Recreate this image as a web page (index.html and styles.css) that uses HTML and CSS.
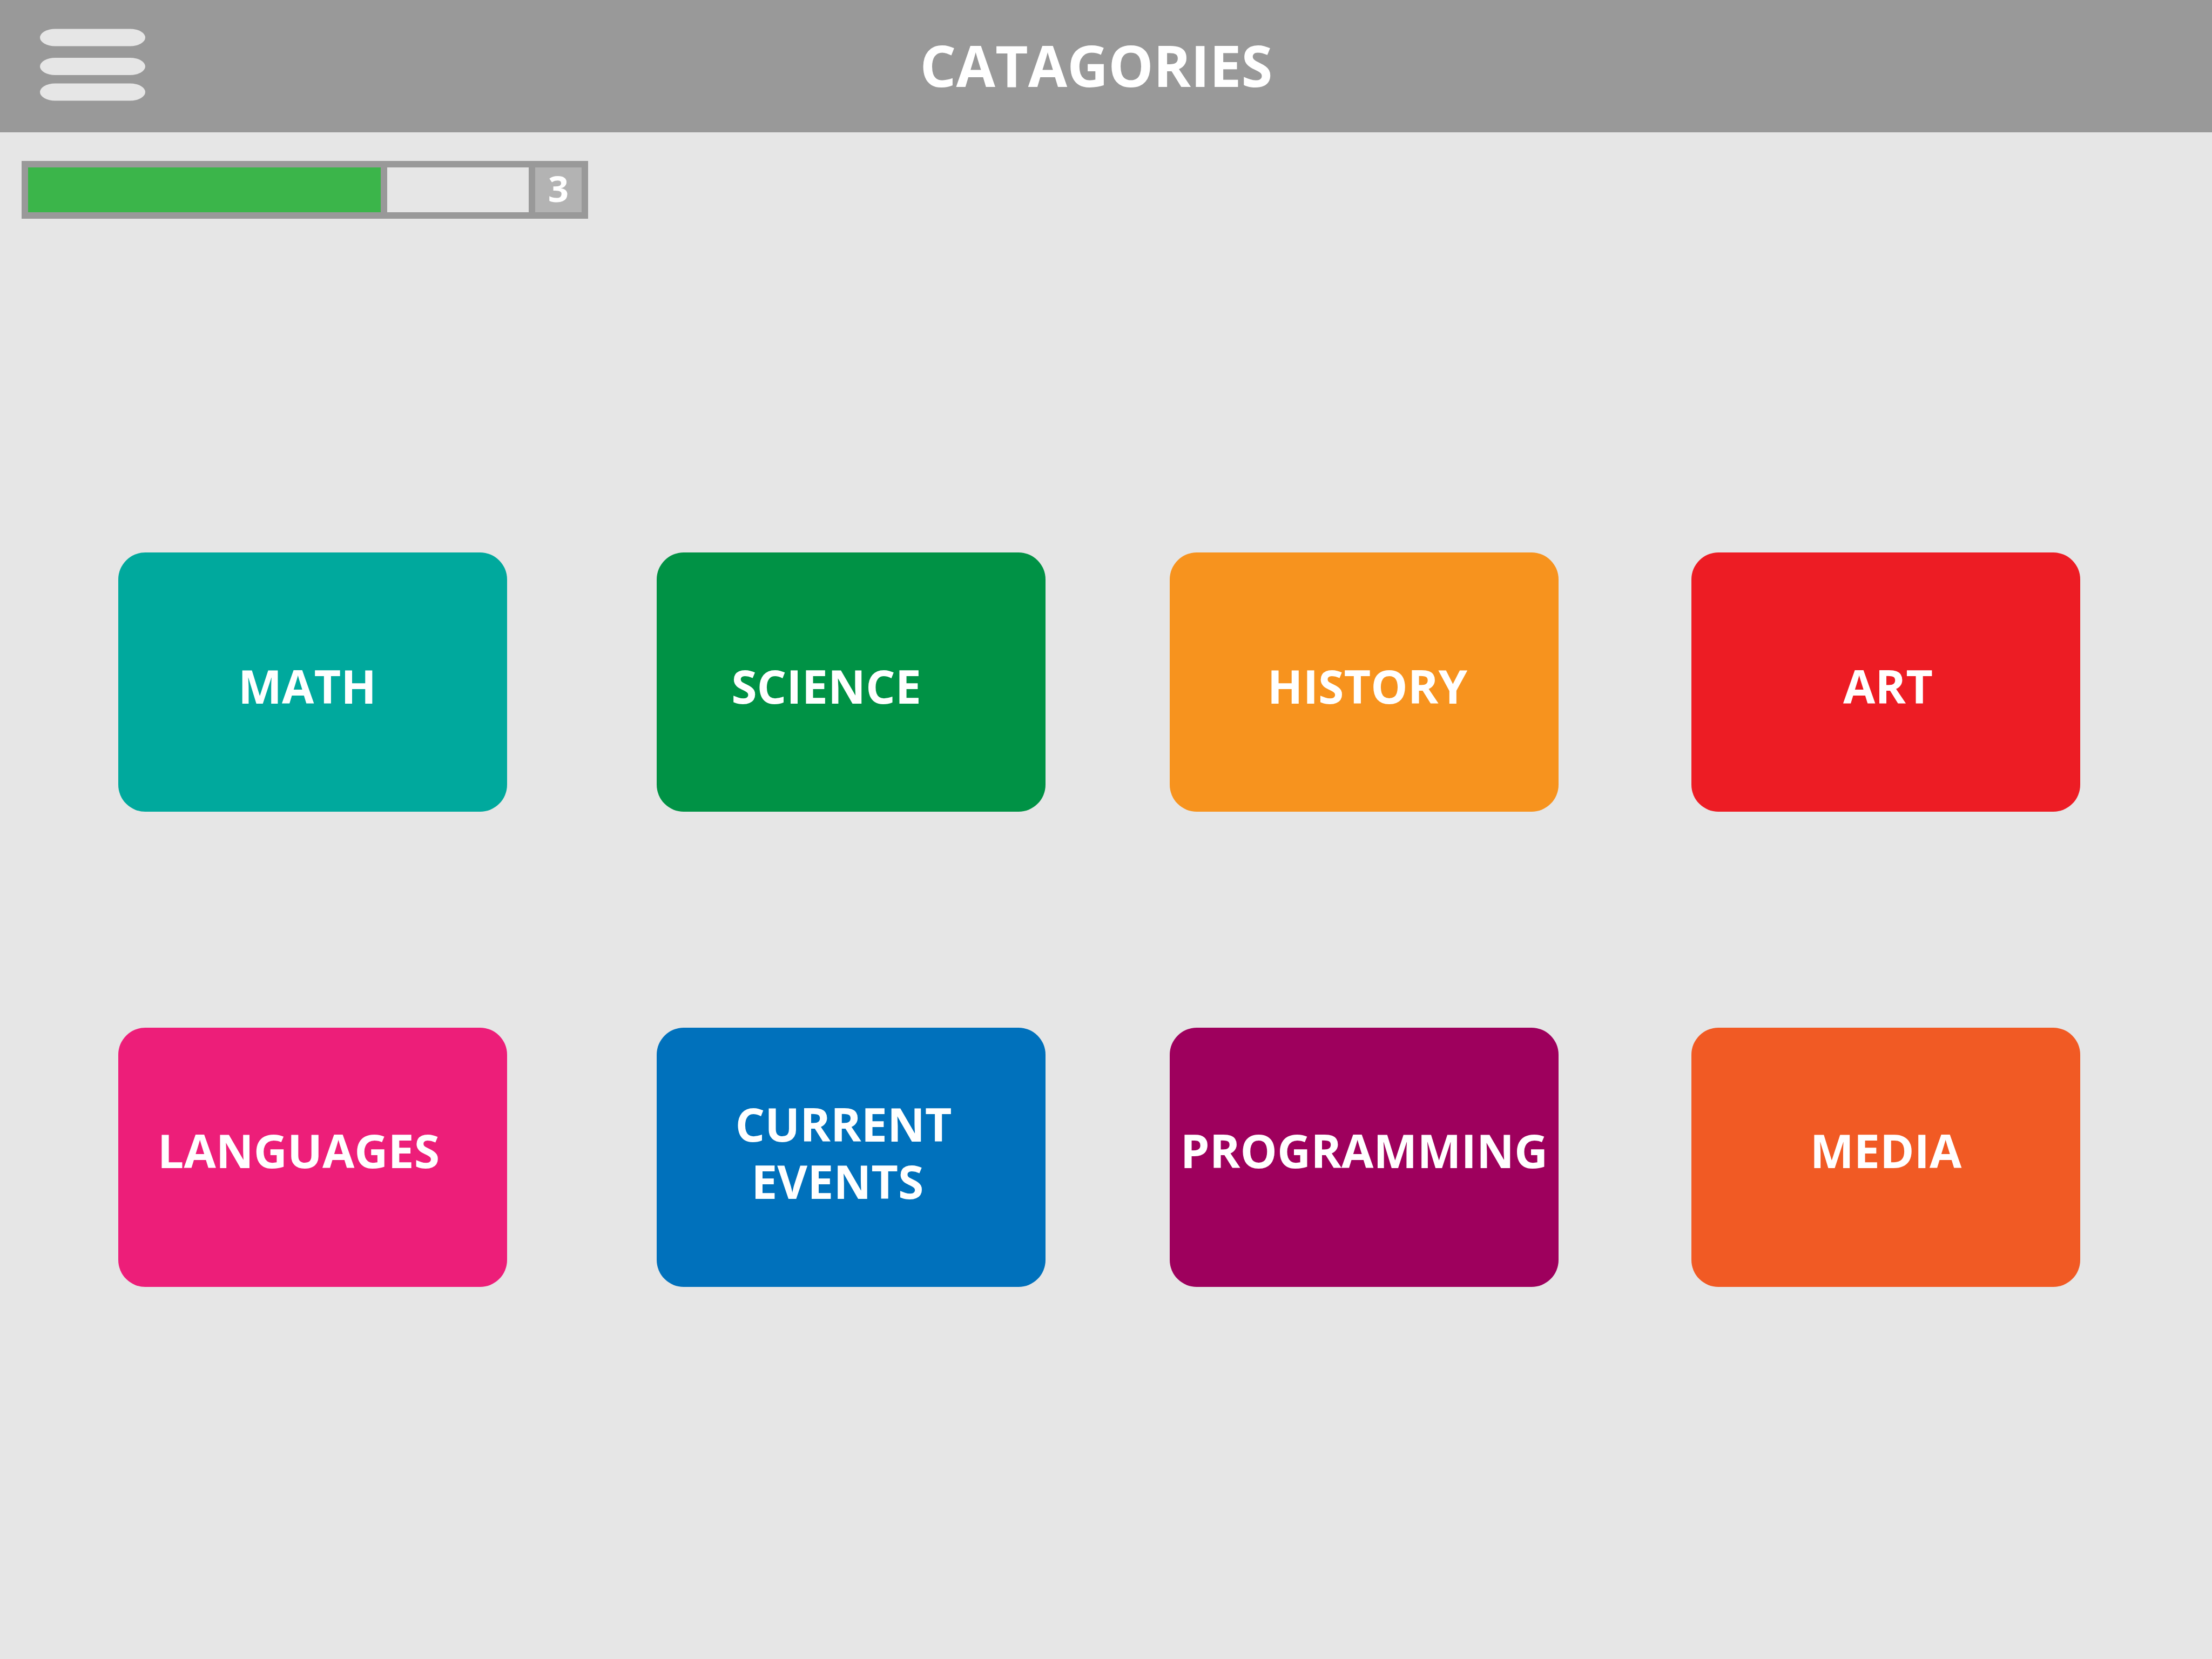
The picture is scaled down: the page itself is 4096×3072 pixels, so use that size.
FILE: index.html
```html
<!DOCTYPE html>
<html lang="en">
<head>
  <meta charset="utf-8">
  <meta name="viewport" content="width=device-width, initial-scale=1">
  <title>Catagories</title>
  <link rel="stylesheet" href="styles.css">
</head>
<body>
  <header class="topbar">
    <button class="menu-button" type="button" aria-label="Menu">
      <svg class="menu-icon" viewBox="0 0 195 134" aria-hidden="true">
        <rect x="0" y="0.5" width="195" height="32" rx="28" ry="16"/>
        <rect x="0" y="54" width="195" height="32" rx="28" ry="16"/>
        <rect x="0" y="101.5" width="195" height="32" rx="28" ry="16"/>
      </svg>
    </button>
    <h1 class="title">CATAGORIES</h1>
  </header>

  <main>
    <section class="level" aria-label="Level progress">
      <progress class="level-bar" value="665" max="927" aria-label="Progress to next level"></progress>
      <span class="level-number">3</span>
    </section>

    <nav class="tiles" aria-label="Categories">
      <button class="tile math" type="button">MATH</button>
      <button class="tile science" type="button">SCIENCE</button>
      <button class="tile history" type="button">HISTORY</button>
      <button class="tile art" type="button">ART</button>
      <button class="tile languages" type="button">LANGUAGES</button>
      <button class="tile events" type="button">CURRENT<br>EVENTS&nbsp;</button>
      <button class="tile programming" type="button">PROGRAMMING</button>
      <button class="tile media" type="button">MEDIA</button>
    </nav>
  </main>
</body>
</html>
```
FILE: styles.css
```css
*,
*::before,
*::after {
  box-sizing: border-box;
}

body {
  margin: 0;
  min-height: 100vh;
  background: #e6e6e6;
  color: #fff;
  font-family: "Open Sans", "Noto Sans", sans-serif;
  font-weight: 700;
}

button {
  margin: 0;
  padding: 0;
  border: 0;
  background: none;
  color: inherit;
  font: inherit;
  cursor: pointer;
}

/* Top bar */
.topbar {
  display: grid;
  grid-template-columns: 232px 1fr 232px;
  align-items: center;
  height: 245px;
  padding: 0 37px;
  background: #999;
}

.menu-button {
  justify-self: start;
  padding: 0 37px 6px;
}

.menu-icon {
  display: block;
  width: 195px;
  height: 134px;
  fill: #e6e6e6;
}

.title {
  margin: 0;
  padding: 0 36px 4px 0;
  font-size: 105px;
  line-height: 144px;
  text-align: center;
}

/* Level meter */
.level {
  display: flex;
  gap: 12px;
  width: 1049px;
  max-width: calc(100% - 80px);
  height: 107px;
  margin: 53px 40px 0;
  padding: 12px;
  background: #999;
}

.level-bar {
  flex: 1;
  min-width: 0;
  height: 100%;
  border: 0;
  appearance: none;
  background: #e6e6e6;
}

.level-bar::-webkit-progress-bar {
  background: #e6e6e6;
}

.level-bar::-webkit-progress-value {
  border-right: 12px solid #999;
  background: #3bb54a;
  box-sizing: border-box;
}

.level-number {
  width: 86px;
  background: #b3b3b3;
  font-size: 67px;
  line-height: 76px;
  text-align: center;
}

/* Category tiles: the odd tracks are the space around the columns */
.tiles {
  display: grid;
  grid-template-columns:
    219fr minmax(0, 720fr)
    277fr minmax(0, 720fr)
    230fr minmax(0, 720fr)
    246fr minmax(0, 720fr)
    244fr;
  row-gap: 400px;
  padding: 618px 0;
}

.tile {
  height: 480px;
  padding-top: 14px;
  border-radius: 50px;
  font-size: 86px;
  line-height: 106px;
  text-align: center;
}

.tile:nth-child(4n + 1) { grid-column: 2; }
.tile:nth-child(4n + 2) { grid-column: 4; }
.tile:nth-child(4n + 3) { grid-column: 6; }
.tile:nth-child(4n + 4) { grid-column: 8; }

.languages,
.programming,
.media {
  padding-top: 0;
  padding-bottom: 26px;
}

.events {
  padding-top: 0;
  padding-bottom: 18px;
}

.math        { background: #00a99d; padding-right: 20px; }
.science     { background: #009245; padding-right: 92px; }
.history     { background: #f7931e; padding-left: 12px; }
.art         { background: #ed1c24; padding-left: 8px; }
.languages   { background: #ed1e79; padding-right: 52px; }
.events      { background: #0071bc; padding-right: 28px; }
.programming { background: #9e005d; }
.media       { background: #f15a24; }
```
